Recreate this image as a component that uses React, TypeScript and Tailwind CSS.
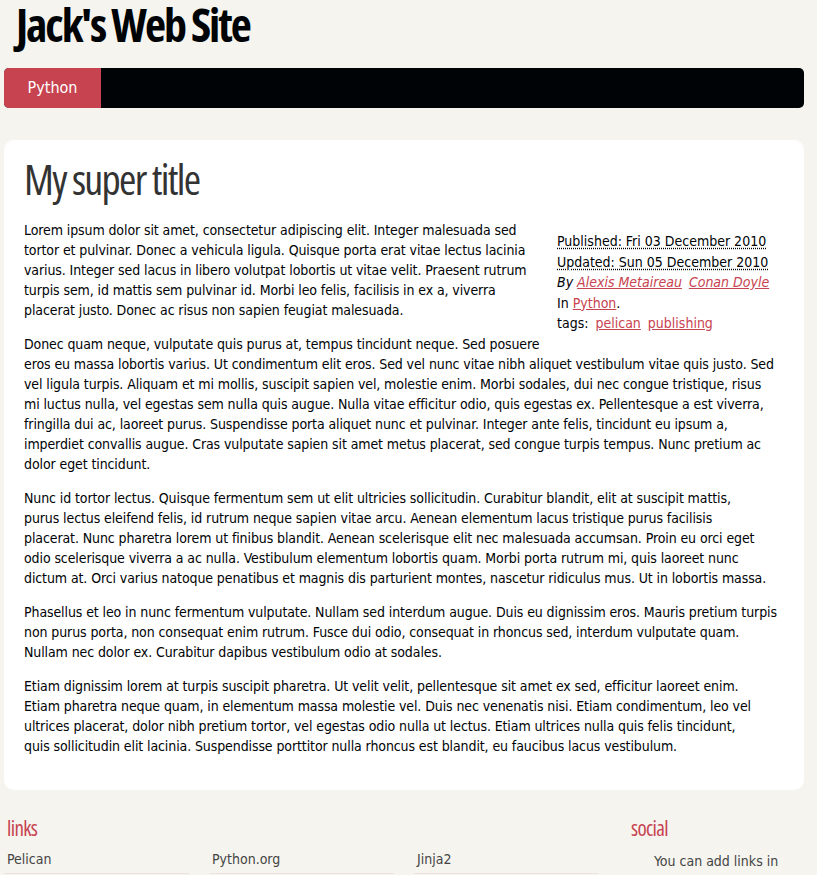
import React from "react";

const intro = [
  "Lorem ipsum dolor sit amet, consectetur adipiscing elit. Integer malesuada sed",
  "tortor et pulvinar. Donec a vehicula ligula. Quisque porta erat vitae lectus lacinia",
  "varius. Integer sed lacus in libero volutpat lobortis ut vitae velit. Praesent rutrum",
  "turpis sem, id mattis sem pulvinar id. Morbi leo felis, facilisis in ex a, viverra",
  "placerat justo. Donec ac risus non sapien feugiat malesuada.",
];

const paragraphs = [
  [
    "Donec quam neque, vulputate quis purus at, tempus tincidunt neque. Sed posuere",
    "eros eu massa lobortis varius. Ut condimentum elit eros. Sed vel nunc vitae nibh aliquet vestibulum vitae quis justo. Sed",
    "vel ligula turpis. Aliquam et mi mollis, suscipit sapien vel, molestie enim. Morbi sodales, dui nec congue tristique, risus",
    "mi luctus nulla, vel egestas sem nulla quis augue. Nulla vitae efficitur odio, quis egestas ex. Pellentesque a est viverra,",
    "fringilla dui ac, laoreet purus. Suspendisse porta aliquet nunc et pulvinar. Integer ante felis, tincidunt eu ipsum a,",
    "imperdiet convallis augue. Cras vulputate sapien sit amet metus placerat, sed congue turpis tempus. Nunc pretium ac",
    "dolor eget tincidunt.",
  ],
  [
    "Nunc id tortor lectus. Quisque fermentum sem ut elit ultricies sollicitudin. Curabitur blandit, elit at suscipit mattis,",
    "purus lectus eleifend felis, id rutrum neque sapien vitae arcu. Aenean elementum lacus tristique purus facilisis",
    "placerat. Nunc pharetra lorem ut finibus blandit. Aenean scelerisque elit nec malesuada accumsan. Proin eu orci eget",
    "odio scelerisque viverra a ac nulla. Vestibulum elementum lobortis quam. Morbi porta rutrum mi, quis laoreet nunc",
    "dictum at. Orci varius natoque penatibus et magnis dis parturient montes, nascetur ridiculus mus. Ut in lobortis massa.",
  ],
  [
    "Phasellus et leo in nunc fermentum vulputate. Nullam sed interdum augue. Duis eu dignissim eros. Mauris pretium turpis",
    "non purus porta, non consequat enim rutrum. Fusce dui odio, consequat in rhoncus sed, interdum vulputate quam.",
    "Nullam nec dolor ex. Curabitur dapibus vestibulum odio at sodales.",
  ],
  [
    "Etiam dignissim lorem at turpis suscipit pharetra. Ut velit velit, pellentesque sit amet ex sed, efficitur laoreet enim.",
    "Etiam pharetra neque quam, in elementum massa molestie vel. Duis nec venenatis nisi. Etiam condimentum, leo vel",
    "ultrices placerat, dolor nibh pretium tortor, vel egestas odio nulla ut lectus. Etiam ultrices nulla quis felis tincidunt,",
    "quis sollicitudin elit lacinia. Suspendisse porttitor nulla rhoncus est blandit, eu faucibus lacus vestibulum.",
  ],
];

const links = ["Pelican", "Python.org", "Jinja2", "You can modify those links in your config file"];

function Lines({ lines }: { lines: string[] }) {
  return (
    <>
      {lines.map((l, i) => (
        <React.Fragment key={i}>
          {i > 0 && <br />}
          {l}
        </React.Fragment>
      ))}
    </>
  );
}

export default function App() {
  return (
    <div className="min-h-screen bg-[#F5F4EF] font-['DejaVu_Sans_Condensed','DejaVu_Sans',sans-serif] text-[14px] leading-[20px] text-[#000305]">
      <div className="ml-[4px] w-[800px]">
        <header className="h-[68px] pl-[12px]">
          <h1 className="font-['Open_Sans',sans-serif] [font-stretch:75%] text-[46px] font-bold leading-[48px] tracking-[-0.045em] text-[#000305]">
            <a href="#">Jack's Web Site</a>
          </h1>
        </header>

        <nav className="flex h-10 overflow-hidden rounded-[5px] bg-[#000305]">
          <a
            href="#"
            className="block w-[97px] bg-[#C74350] text-center text-[16px] leading-[40px] font-medium text-white"
          >
            Python
          </a>
        </nav>

        <section className="mt-8 rounded-[10px] bg-white px-5 pt-[18px] pb-5">
          <h1 className="mb-5 font-['Open_Sans',sans-serif] [font-stretch:75%] text-[42px] font-normal leading-[42px] tracking-[-0.04em] text-[#333]">
            My super title
          </h1>

          <div className="flow-root tracking-[-0.1px]">
            <aside className="float-right mt-[11px] mb-[6px] ml-1 w-[227px] leading-[20.5px] tracking-normal">
              <div>
                <abbr className="underline decoration-dotted underline-offset-[2px]" title="2010-12-03">
                  Published: Fri 03 December 2010
                </abbr>
              </div>
              <div>
                <abbr className="underline decoration-dotted underline-offset-[2px]" title="2010-12-05">
                  Updated: Sun 05 December 2010
                </abbr>
              </div>
              <address className="italic">
                By{" "}
                <a href="#" className="text-[#C74350] underline">
                  Alexis Metaireau
                </a>{" "}
                <a href="#" className="ml-[3px] text-[#C74350] underline">
                  Conan Doyle
                </a>
              </address>
              <div>
                In{" "}
                <a href="#" className="text-[#C74350] underline">
                  Python
                </a>
                .
              </div>
              <div>
                tags:{" "}
                <a href="#" className="ml-[3px] text-[#C74350] underline">
                  pelican
                </a>{" "}
                <a href="#" className="ml-[3px] text-[#C74350] underline">
                  publishing
                </a>
              </div>
            </aside>

            <p className="mb-[14px] whitespace-nowrap">
              <Lines lines={intro} />
            </p>
            {paragraphs.map((p, i) => (
              <p key={i} className="mb-[14px] whitespace-nowrap">
                <Lines lines={p} />
              </p>
            ))}
          </div>
        </section>

        <footer className="mt-6 flex text-[#444]">
          <div className="w-[627px]">
            <h2 className="pl-[3px] font-['Open_Sans',sans-serif] [font-stretch:75%] text-[21px] leading-[28px] tracking-[-0.03em] text-[#C74350]">
              links
            </h2>
            <ul className="mt-[7px] grid w-[595px] grid-cols-3 gap-x-5">
              {links.map((l) => (
                <li key={l} className="border-b border-[#F0E1E1] pb-[4px] pl-[3px]">
                  <a href="#">{l}</a>
                </li>
              ))}
            </ul>
          </div>
          <div className="w-[173px]">
            <h2 className="font-['Open_Sans',sans-serif] [font-stretch:75%] text-[21px] leading-[28px] tracking-[-0.03em] text-[#C74350]">
              social
            </h2>
            <ul className="mt-[9px] pl-[23px]">
              <li>You can add links in your config file</li>
              <li>Another social link</li>
            </ul>
          </div>
        </footer>
      </div>
    </div>
  );
}
